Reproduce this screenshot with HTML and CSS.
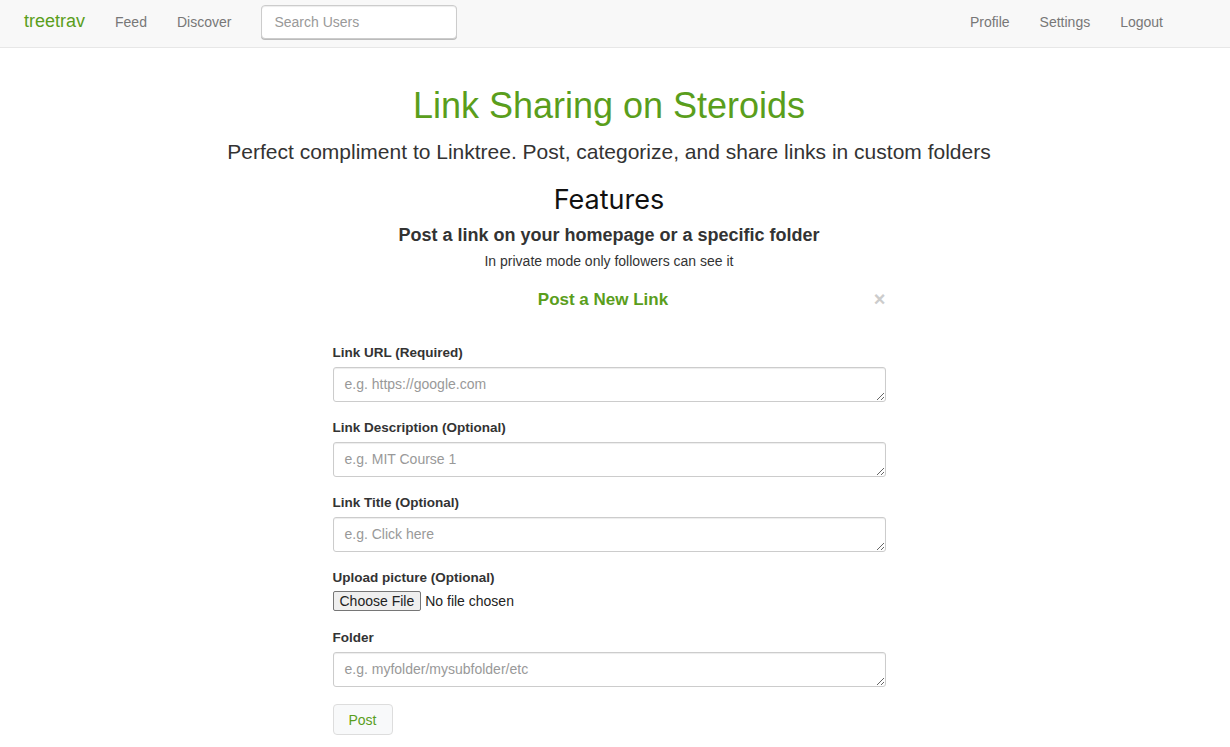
FILE: index.html
```html
<!DOCTYPE html>
<html>
  <head>
    <link rel="stylesheet" href="styles.css">
  </head>
  <body>
    <nav class="navbar">
      <a class="brand" href="#">treetrav</a>
      <a class="nav-link" href="#">Feed</a>
      <a class="nav-link" href="#">Discover</a>
      <input class="search" type="text" placeholder="Search Users" />
      <div class="nav-right">
        <a class="nav-link" href="#">Profile</a>
        <a class="nav-link" href="#">Settings</a>
        <a class="nav-link" href="#">Logout</a>
      </div>
    </nav>

    <main class="main">
      <h1 class="hero-title">Link Sharing on Steroids</h1>
      <p class="hero-sub">Perfect compliment to Linktree. Post, categorize, and share links in custom folders</p>

      <h2 class="features">Features</h2>
      <h3 class="feature-title">Post a link on your homepage or a specific folder</h3>
      <p class="feature-note">In private mode only followers can see it</p>

      <div class="post-box">
        <div class="post-header">
          <div class="post-title">Post a New Link</div>
          <span class="close">&times;</span>
        </div>

        <form class="post-form">
          <div class="field">
            <label>Link URL (Required)</label>
            <textarea rows="1" placeholder="e.g. https://google.com"></textarea>
          </div>
          <div class="field">
            <label>Link Description (Optional)</label>
            <textarea rows="1" placeholder="e.g. MIT Course 1"></textarea>
          </div>
          <div class="field">
            <label>Link Title (Optional)</label>
            <textarea rows="1" placeholder="e.g. Click here"></textarea>
          </div>
          <div class="field file-field">
            <label>Upload picture (Optional)</label>
            <div class="file-row">
              <span class="file-btn">Choose File</span>
              <span class="file-name">No file chosen</span>
            </div>
          </div>
          <div class="field">
            <label>Folder</label>
            <textarea rows="1" placeholder="e.g. myfolder/mysubfolder/etc"></textarea>
          </div>
          <button class="post-btn" type="button">Post</button>
        </form>
      </div>
    </main>
  </body>
</html>
```

FILE: styles.css
```css
body {
  margin: 0;
  font-family: "Liberation Sans", Arial, sans-serif;
  font-size: 14px;
  color: #333;
  background-color: white;
}

a {
  text-decoration: none;
}

.navbar {
  display: flex;
  align-items: center;
  height: 43px;
  padding: 0 52px 4px 9px;
  background-color: #f8f8f8;
  border-bottom: 1px solid #e7e7e7;
}

.brand {
  padding: 0 15px;
  font-size: 18px;
  color: #5a9e1c;
}

.nav-link {
  padding: 0 15px;
  color: #777;
  font-size: 14px;
}

.search {
  margin-left: 15px;
  width: 196px;
  height: 34px;
  box-sizing: border-box;
  padding: 6px 12px;
  border: 1px solid #ccc;
  border-radius: 4px;
  box-shadow: inset 0 1px 1px rgba(0, 0, 0, 0.075), 0 1px 0 #bbb;
  font-family: inherit;
  font-size: 14px;
}

.search::placeholder {
  color: #999;
}

.nav-right {
  margin-left: auto;
  display: flex;
}

.main {
  display: flex;
  flex-direction: column;
  align-items: center;
  padding-right: 12px;
}

.hero-title {
  margin: 36px 0 0;
  font-size: 36px;
  font-weight: normal;
  line-height: 44px;
  color: #5a9e1c;
}

.hero-sub {
  margin: 11px 0 0;
  font-size: 21px;
  line-height: 26px;
  color: #333;
}

.features {
  margin: 18px 0 0;
  font-family: Inter, "Noto Sans", sans-serif;
  font-size: 27px;
  font-weight: normal;
  line-height: 34px;
  color: #111;
}

.feature-title {
  margin: 7px 0 0;
  font-size: 18px;
  line-height: 22px;
  color: #333;
}

.feature-note {
  margin: 6px 0 0;
  font-size: 14px;
  line-height: 18px;
}

.post-box {
  width: 553px;
  margin-top: 19px;
}

.post-header {
  position: relative;
  text-align: center;
  height: 22px;
  line-height: 22px;
}

.post-title {
  font-size: 17px;
  font-weight: bold;
  color: #5a9e1c;
  margin-right: 12px;
}

.close {
  position: absolute;
  right: 0;
  top: -1px;
  font-size: 20px;
  font-weight: bold;
  color: #ccc;
}

.post-form {
  display: flex;
  flex-direction: column;
  align-items: flex-start;
  margin-top: 33px;
}

.field {
  display: flex;
  flex-direction: column;
  width: 100%;
  margin-bottom: 17px;
}

.field label {
  font-size: 13.5px;
  font-weight: bold;
  line-height: 18px;
  margin-bottom: 5px;
}

.field textarea {
  box-sizing: border-box;
  width: 100%;
  height: 35px;
  padding: 7px 11px;
  border: 1px solid #ccc;
  border-radius: 3px;
  box-shadow: inset 0 1px 1px rgba(0, 0, 0, 0.075);
  font-family: inherit;
  font-size: 14px;
  line-height: 18px;
  resize: vertical;
}

.field textarea::placeholder {
  color: #999;
}

.file-field {
  margin-bottom: 18px;
}

.file-row {
  display: flex;
  align-items: center;
  font-size: 14px;
  margin-top: -1px;
}

.file-btn {
  padding: 1px 6px;
  border: 1px solid #767676;
  border-radius: 2px;
  background-color: #efefef;
  color: #222;
  line-height: 16px;
}

.file-name {
  margin-left: 4px;
  color: #222;
}

.post-btn {
  width: 60px;
  height: 31px;
  border: 1px solid #ddd;
  border-radius: 4px;
  background-color: #f8f9fa;
  color: #5a9e1c;
  font-family: inherit;
  font-size: 14px;
}
```
